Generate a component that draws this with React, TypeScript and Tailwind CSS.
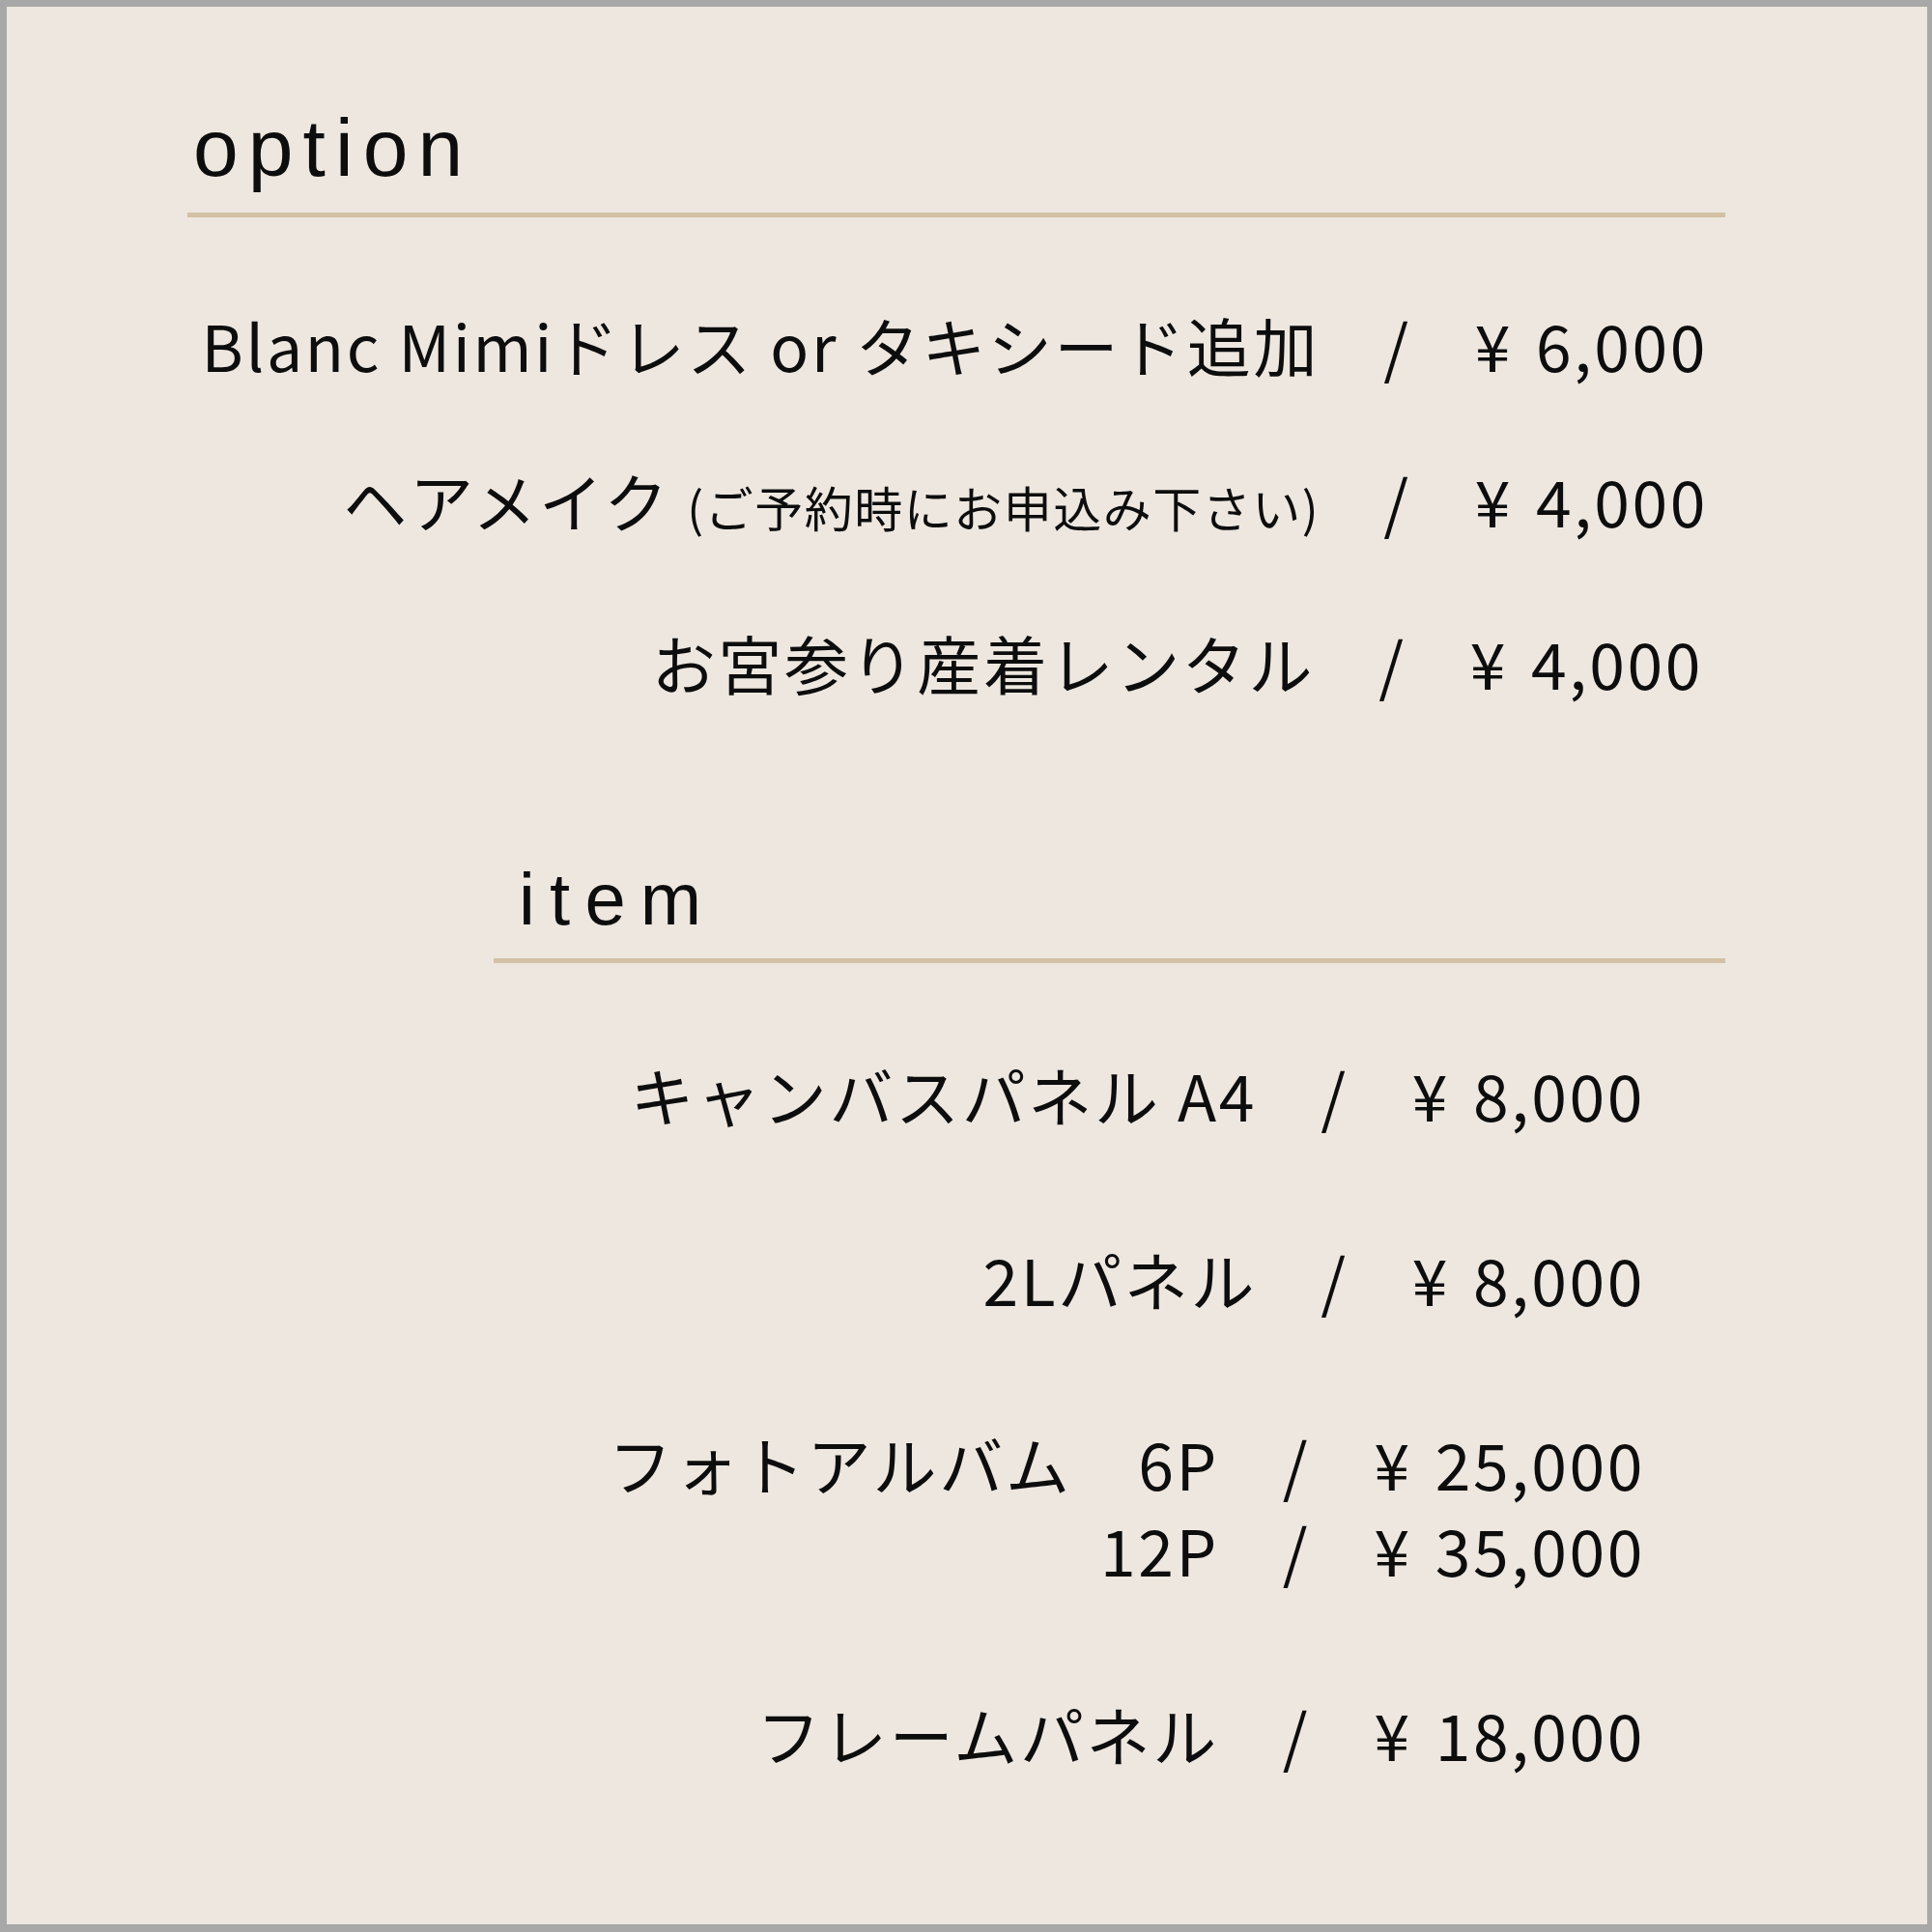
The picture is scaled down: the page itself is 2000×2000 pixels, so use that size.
const jp = "font-['Noto_Sans_CJK_JP','Noto_Sans',sans-serif]";
const head = "font-['Liberation_Sans',Arial,sans-serif]";

type Row = { label: React.ReactNode; price: string };

function PriceRow({ label, price, className = "" }: { label: React.ReactNode; price: string; className?: string }) {
  return (
    <div className={`flex items-baseline justify-end gap-[66px] whitespace-pre ${className}`}>
      <span>{label}</span>
      <span>/</span>
      <span>
        ¥<span className="ml-[24px]">{price}</span>
      </span>
    </div>
  );
}

const options: Row[] = [
  { label: "Blanc Mimiドレス or タキシード追加", price: "6,000" },
  {
    label: (
      <>
        ヘアメイク <span className="text-[50px] tracking-[0.03em]">(ご予約時にお申込み下さい)</span>
      </>
    ),
    price: "4,000",
  },
  { label: "お宮参り産着レンタル", price: "4,000" },
];

export default function App() {
  return (
    <div className="w-[2000px] h-[2000px] bg-[#ede7e0] border-t-[7px] border-l-[7px] border-r-[5px] border-b-[8px] border-[#a8a8a8] text-[#0d0d0d]">
      {/* option */}
      <section className="ml-[187px] w-[1592px] pt-[96px]">
        <h2 className={`${head} text-[84px] leading-[100px] tracking-[0.12em] pl-[6px]`}>option</h2>
        <div className="mt-[17px] h-[5px] bg-[#d3c1a6]" />
        <div className={`${jp} mt-[51px] text-[66px] leading-[161px] tracking-[0.04em]`}>
          <PriceRow label={options[0].label} price={options[0].price} className="pr-[18px]" />
          <PriceRow label={options[1].label} price={options[1].price} className="pr-[18px]" />
          <PriceRow label={options[2].label} price={options[2].price} className="pr-[23px]" />
        </div>
      </section>

      {/* item */}
      <section className="ml-[504px] w-[1275px] mt-[115px]">
        <h2 className={`${head} text-[76px] leading-[100px] tracking-[0.2em] pl-[26px]`}>item</h2>
        <div className="mt-[11px] h-[5px] bg-[#d3c1a6]" />
        <div className={`${jp} mt-[91px] flex flex-col gap-[102px] text-[66px] leading-[89px] tracking-[0.04em] pr-[83px]`}>
          <PriceRow label="キャンバスパネル A4" price="8,000" />
          <PriceRow label="2Lパネル" price="8,000" />
          <div>
            <PriceRow label="フォトアルバム　6P" price="25,000" />
            <PriceRow label="12P" price="35,000" />
          </div>
          <PriceRow label="フレームパネル" price="18,000" />
        </div>
      </section>
    </div>
  );
}
